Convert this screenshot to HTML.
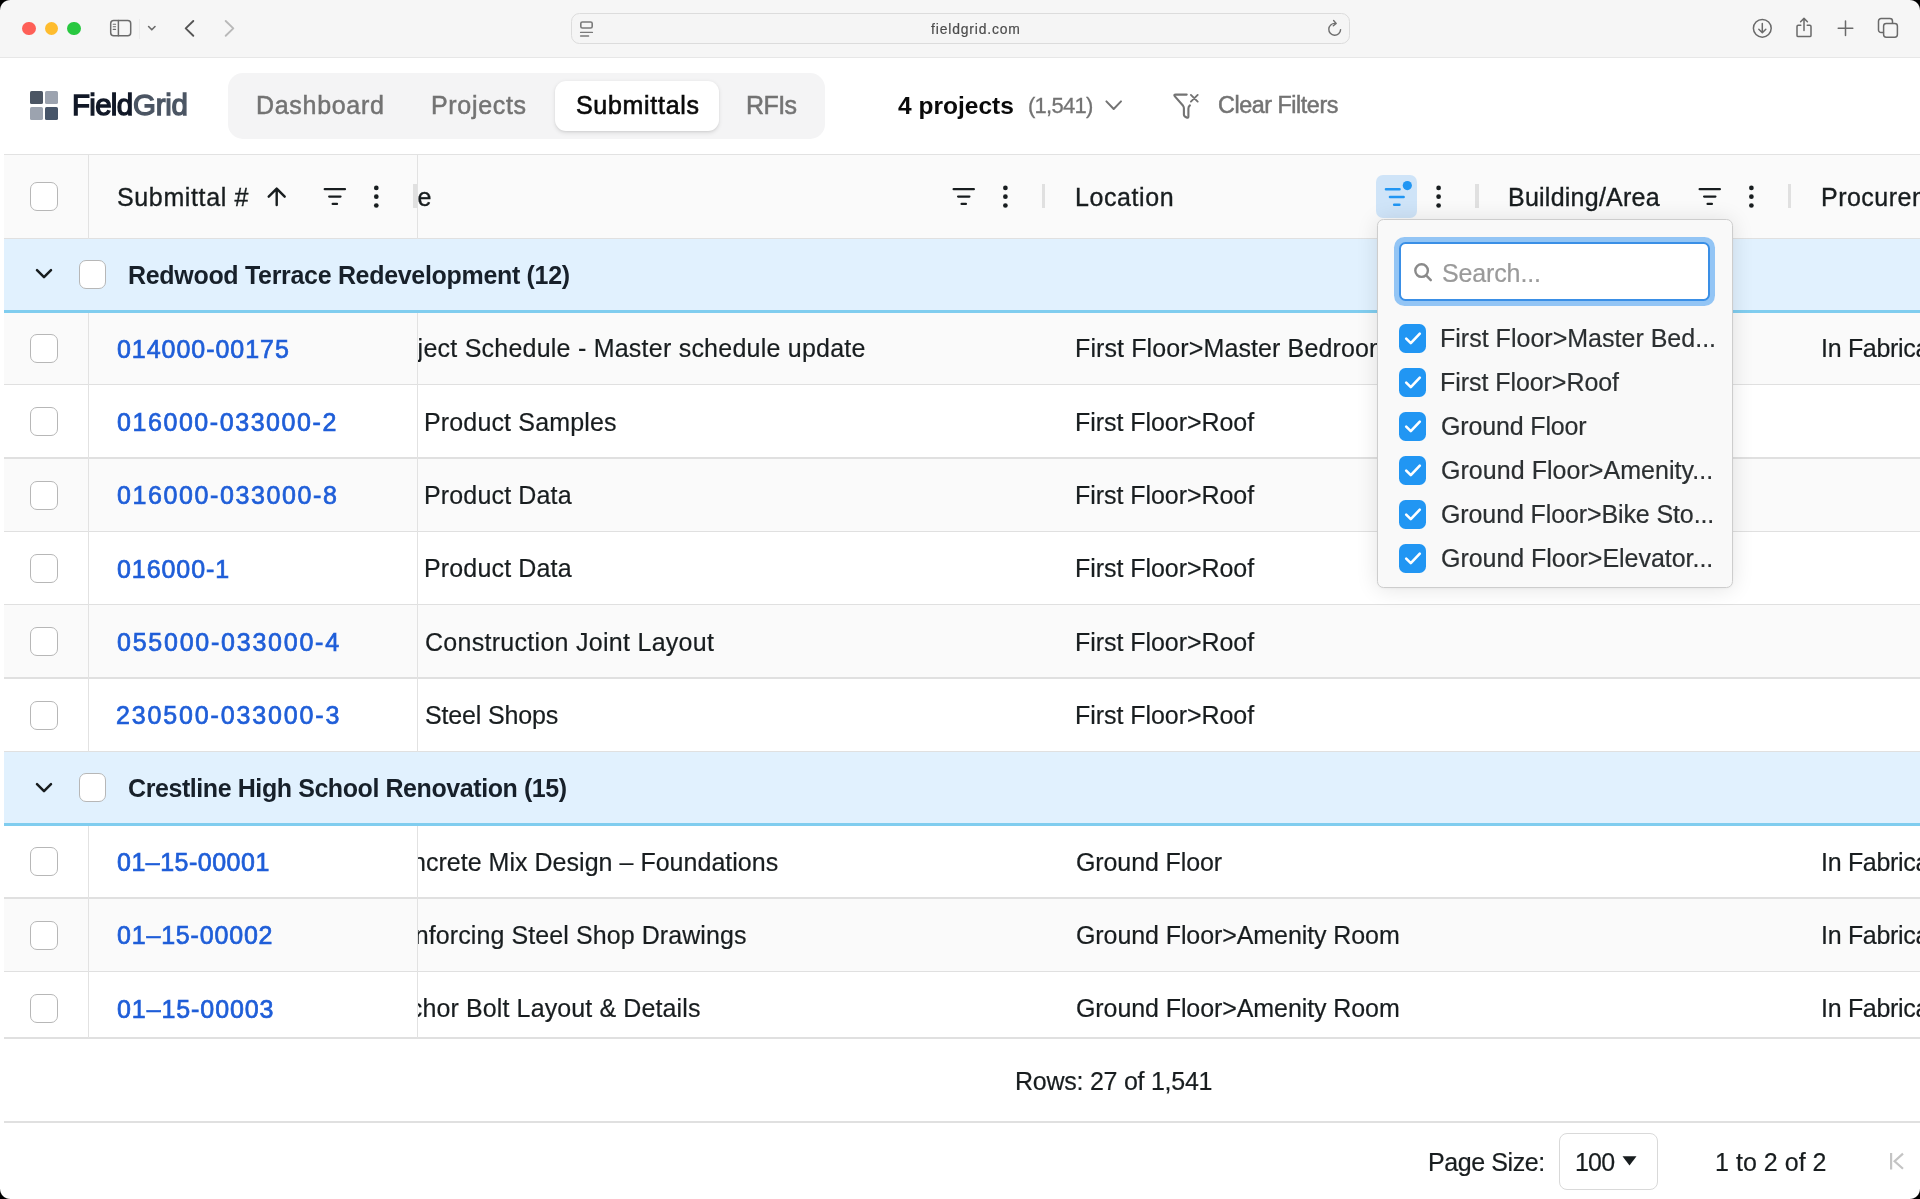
<!DOCTYPE html>
<html lang="en"><head><meta charset="utf-8"><title>FieldGrid - Submittals</title>
<style>
html,body{margin:0;padding:0}
body{width:1920px;height:1199px;position:relative;overflow:hidden;background:#fff;font-family:"Liberation Sans",sans-serif;color:#181d1f}
.a{position:absolute;box-sizing:border-box}
.t{position:absolute;white-space:nowrap;will-change:transform;font-family:"Liberation Sans",sans-serif}
.clip{position:absolute;overflow:hidden}
svg{position:absolute;overflow:visible}
.hl{position:absolute;height:1.5px;background:#e0e0e0;left:3.5px;right:0}
.cb{position:absolute;box-sizing:border-box;width:27.6px;height:29px;border:1.6px solid #b7b7b7;border-radius:7px;background:#fff}
.cbk{position:absolute;box-sizing:border-box;width:28px;height:28px;border-radius:6.5px;background:#2196f3}
.rowbg{position:absolute;left:3.5px;right:0;background:#fafafa}
.grp{position:absolute;left:3.5px;right:0;background:#e1f1fe;border-bottom:3.6px solid #80cdef;box-sizing:border-box}
.vl{position:absolute;width:1.4px;background:#e2e2e2}
.rs{position:absolute;width:3.4px;height:24.4px;background:#e0e0e0}

</style></head>
<body>
<div class="a" style="left:0;top:0;width:1920px;height:58.1px;background:#f6f6f6;border-bottom:1.7px solid #e7e7e7"></div>
<div class="a" style="left:22.1px;top:21.6px;width:13.8px;height:13.8px;border-radius:50%;background:#fe5f57"></div>
<div class="a" style="left:44.6px;top:21.6px;width:13.8px;height:13.8px;border-radius:50%;background:#febc2e"></div>
<div class="a" style="left:67.1px;top:21.6px;width:13.8px;height:13.8px;border-radius:50%;background:#28c840"></div>
<svg style="left:108px;top:17px" width="52" height="24" viewBox="108 17 52 24" fill="none" stroke="#6b6b6b" stroke-width="1.5" stroke-linecap="round" stroke-linejoin="round">
<rect x="110.7" y="20.5" width="20" height="15.2" rx="3"/><path d="M118.4 20.5v15.2"/><path d="M113.2 24.2h2.4M113.2 26.8h2.4M113.2 29.4h2.4" stroke-width="1.1"/>
<path d="M148.6 26.5l3.2 3.3 3.2-3.3" stroke-width="1.6"/></svg>
<div class="a" style="left:139.3px;top:19px;width:1px;height:20px;background:#ebebeb"></div>
<svg style="left:180px;top:17px" width="60" height="24" viewBox="180 17 60 24" fill="none" stroke-width="2" stroke-linecap="round" stroke-linejoin="round">
<path d="M193.3 21l-7.6 7.4 7.6 7.4" stroke="#555" stroke-width="1.9"/><path d="M225.7 21l7.6 7.4-7.6 7.4" stroke="#b9b9b9" stroke-width="1.9"/></svg>
<div class="a" style="left:570.5px;top:12.6px;width:779px;height:31.8px;border-radius:8.5px;background:#f5f5f5;border:1.4px solid #dcdcdc"></div>
<svg style="left:578px;top:19px" width="18" height="20" viewBox="578 19 18 20" fill="none" stroke="#7a7a7a" stroke-width="1.4" stroke-linecap="round" stroke-linejoin="round">
<rect x="580.8" y="22" width="11.4" height="6" rx="1.6" stroke-width="1.6"/><path d="M580.6 32.4h11.8M580.6 36h8"/></svg>
<svg style="left:1326px;top:19px" width="18" height="20" viewBox="1326 19 18 20" fill="none" stroke="#6e6e6e" stroke-width="1.4" stroke-linecap="round" stroke-linejoin="round">
<path d="M1340.6 29.6a5.9 5.9 0 1 1-5.6-6.2"/><path d="M1333.6 20.6l2.6 2.8-2.9 2.4"/></svg>
<svg style="left:1750px;top:15px" width="160" height="28" viewBox="1750 15 160 28" fill="none" stroke="#6a6a6a" stroke-width="1.5" stroke-linecap="round" stroke-linejoin="round">
<circle cx="1762.3" cy="28.3" r="8.9"/><path d="M1762.3 23.5v9M1758.8 29.3l3.5 3.5 3.5-3.5"/>
<path d="M1800.8 25.2h-2.6a1.2 1.2 0 0 0-1.2 1.2v9a1.2 1.2 0 0 0 1.2 1.2h11.6a1.2 1.2 0 0 0 1.2-1.2v-9a1.2 1.2 0 0 0-1.2-1.2h-2.6"/><path d="M1804 30.6V18.6M1800.6 21.8l3.4-3.4 3.4 3.4"/>
<path d="M1845.5 21v14.6M1838.2 28.3h14.6"/>
<path d="M1883.4 32.6h-2.3a2.6 2.6 0 0 1-2.6-2.6v-8.8a2.6 2.6 0 0 1 2.6-2.6h8.8a2.6 2.6 0 0 1 2.6 2.6v2"/><rect x="1883.6" y="23.4" width="13.8" height="13.8" rx="2.6"/></svg>
<div class="a" style="left:30.2px;top:91.2px;width:12.6px;height:12.8px;border-radius:1.6px;background:#4b5563"></div>
<div class="a" style="left:45.2px;top:91.2px;width:12.6px;height:12.8px;border-radius:1.6px;background:#9ca3af"></div>
<div class="a" style="left:30.2px;top:106.8px;width:12.6px;height:12.8px;border-radius:1.6px;background:#9ca3af"></div>
<div class="a" style="left:45.2px;top:106.8px;width:12.6px;height:12.8px;border-radius:1.6px;background:#475569"></div>
<div class="a" style="left:228px;top:72.5px;width:597px;height:66.5px;border-radius:15px;background:#f4f4f5"></div>
<div class="a" style="left:555px;top:80.5px;width:164px;height:50.5px;border-radius:11px;background:#fff;box-shadow:0 1.5px 4px rgba(0,0,0,.10),0 1px 2px rgba(0,0,0,.06)"></div>
<svg style="left:1100px;top:90px" width="110" height="34" viewBox="1100 90 110 34" fill="none" stroke="#737373" stroke-width="2" stroke-linecap="round" stroke-linejoin="round">
<path d="M1106.4 101.4l7.3 7.6 7.3-7.6"/>
<path d="M1186.7 94.6H1175.8Q1173.4 94.6 1174.9 96.4L1183.1 105.8Q1183.9 106.8 1183.9 108.2V114.8Q1183.9 116 1184.9 116.5L1186.6 117.5Q1188.4 118.4 1188.4 116.4V108.4Q1188.4 106.6 1189.9 105.4" stroke-width="2.1"/><path d="M1190.9 94.9l6.8 6.7M1197.7 94.9l-6.8 6.7" stroke-width="1.9"/></svg>
<span class="t" style="left:931.10px;top:19.50px;font-size:13.9px;line-height:19px;color:#4c4c4c;letter-spacing:0.844px;-webkit-text-stroke:0.2px #4c4c4c;">fieldgrid.com</span>
<span class="t" style="left:71.80px;top:84.40px;font-size:29.5px;line-height:41px;color:#111827;letter-spacing:-0.709px;-webkit-text-stroke:1.3px #111827;">Field</span>
<span class="t" style="left:132.50px;top:84.40px;font-size:29.5px;line-height:41px;color:#4b5563;letter-spacing:-0.308px;-webkit-text-stroke:1.3px #4b5563;">Grid</span>
<span class="t" style="left:255.50px;top:88.10px;font-size:25px;line-height:35px;color:#737373;letter-spacing:0.700px;-webkit-text-stroke:0.5px #737373;">Dashboard</span>
<span class="t" style="left:431.40px;top:88.10px;font-size:25px;line-height:35px;color:#737373;letter-spacing:0.685px;-webkit-text-stroke:0.5px #737373;">Projects</span>
<span class="t" style="left:575.50px;top:88.10px;font-size:25px;line-height:35px;color:#0a0a0a;letter-spacing:0.699px;-webkit-text-stroke:0.6px #0a0a0a;">Submittals</span>
<span class="t" style="left:746.00px;top:88.10px;font-size:25px;line-height:35px;color:#737373;letter-spacing:-0.590px;-webkit-text-stroke:0.5px #737373;">RFIs</span>
<span class="t" style="left:898.00px;top:88.70px;font-size:24.5px;line-height:34px;color:#0a0a0a;letter-spacing:0.021px;font-weight:700;">4 projects</span>
<span class="t" style="left:1028.00px;top:90.20px;font-size:22px;line-height:31px;color:#737373;letter-spacing:-0.730px;-webkit-text-stroke:0.3px #737373;">(1,541)</span>
<span class="t" style="left:1217.50px;top:89.00px;font-size:23.3px;line-height:33px;color:#737373;letter-spacing:-0.434px;-webkit-text-stroke:0.5px #737373;">Clear Filters</span>
<div class="a" style="left:3.5px;top:154px;right:0;height:84.5px;background:#fafafa"></div>
<div class="hl" style="top:153.6px;background:#e2e2e2"></div>
<div class="rowbg" style="top:311.33px;height:73.33px"></div>
<div class="rowbg" style="top:458.00px;height:73.33px"></div>
<div class="rowbg" style="top:604.66px;height:73.33px"></div>
<div class="rowbg" style="top:897.99px;height:73.33px"></div>
<div class="hl" style="top:383.96px"></div>
<div class="hl" style="top:457.30px"></div>
<div class="hl" style="top:530.63px"></div>
<div class="hl" style="top:603.96px"></div>
<div class="hl" style="top:677.29px"></div>
<div class="hl" style="top:750.63px"></div>
<div class="hl" style="top:897.29px"></div>
<div class="hl" style="top:970.63px"></div>
<div class="hl" style="top:237.6px"></div>
<div class="a" style="left:3.5px;right:0;top:1038px;height:161px;background:#fff"></div>
<div class="hl" style="top:1037.2px"></div>
<div class="hl" style="top:1121.3px"></div>
<div class="vl" style="left:88px;top:154px;height:884px"></div>
<div class="vl" style="left:417px;top:154px;height:884px"></div>
<div class="grp" style="top:238.6px;height:74.03px"></div>
<div class="grp" style="top:751.63px;height:74.13px"></div>
<div class="rs" style="left:413.2px;top:184px;width:4px"></div>
<div class="rs" style="left:1042px;top:184px"></div>
<div class="rs" style="left:1475.3px;top:184px"></div>
<div class="rs" style="left:1788px;top:184px"></div>
<div class="cb" style="left:30.2px;top:182.2px"></div>
<div class="cb" style="left:30.2px;top:334.00px"></div>
<div class="cb" style="left:30.2px;top:407.33px"></div>
<div class="cb" style="left:30.2px;top:480.66px"></div>
<div class="cb" style="left:30.2px;top:554.00px"></div>
<div class="cb" style="left:30.2px;top:627.33px"></div>
<div class="cb" style="left:30.2px;top:700.66px"></div>
<div class="cb" style="left:30.2px;top:847.33px"></div>
<div class="cb" style="left:30.2px;top:920.66px"></div>
<div class="cb" style="left:30.2px;top:993.99px"></div>
<div class="cb" style="left:78.7px;top:259.80px"></div>
<svg style="left:34px;top:266.20px" width="20" height="16" viewBox="0 0 20 16" fill="none" stroke="#181d1f" stroke-width="2.5" stroke-linecap="round" stroke-linejoin="round"><path d="M3 4.2l7 7 7-7"/></svg>
<div class="cb" style="left:78.7px;top:773.29px"></div>
<svg style="left:34px;top:779.69px" width="20" height="16" viewBox="0 0 20 16" fill="none" stroke="#181d1f" stroke-width="2.5" stroke-linecap="round" stroke-linejoin="round"><path d="M3 4.2l7 7 7-7"/></svg>
<svg style="left:0;top:154px" width="1920" height="84" viewBox="0 154 1920 84" fill="none" stroke-width="2.3" stroke-linecap="round" stroke-linejoin="round">
<path d="M276.7 205v-16.2M268.7 196.7l8-8.1 8 8.1" stroke="#181d1f" stroke-width="2.4"/>
<path d="M324.75 189.2h20.2M329.20 196.6h11.3M332.70 203.9h4.3" stroke="#181d1f"/>
<circle cx="376.3" cy="187.89999999999998" r="2.35" fill="#181d1f" stroke="none"/><circle cx="376.3" cy="196.7" r="2.35" fill="#181d1f" stroke="none"/><circle cx="376.3" cy="205.5" r="2.35" fill="#181d1f" stroke="none"/>
<path d="M953.65 189.2h20.2M958.10 196.6h11.3M961.60 203.9h4.3" stroke="#181d1f"/>
<circle cx="1005.4" cy="187.89999999999998" r="2.35" fill="#181d1f" stroke="none"/><circle cx="1005.4" cy="196.7" r="2.35" fill="#181d1f" stroke="none"/><circle cx="1005.4" cy="205.5" r="2.35" fill="#181d1f" stroke="none"/>
<circle cx="1438.6" cy="187.89999999999998" r="2.35" fill="#181d1f" stroke="none"/><circle cx="1438.6" cy="196.7" r="2.35" fill="#181d1f" stroke="none"/><circle cx="1438.6" cy="205.5" r="2.35" fill="#181d1f" stroke="none"/>
<path d="M1699.65 189.2h20.2M1704.10 196.6h11.3M1707.60 203.9h4.3" stroke="#181d1f"/>
<circle cx="1751.4" cy="187.89999999999998" r="2.35" fill="#181d1f" stroke="none"/><circle cx="1751.4" cy="196.7" r="2.35" fill="#181d1f" stroke="none"/><circle cx="1751.4" cy="205.5" r="2.35" fill="#181d1f" stroke="none"/>
</svg>
<div class="a" style="left:1559px;top:1132.5px;width:99px;height:57px;border:1.5px solid #d9d9d9;border-radius:8px;background:#fff"></div>
<svg style="left:1620px;top:1154px" width="18" height="14" viewBox="0 0 18 14"><path d="M2.5 2.3h14l-7 9.3z" fill="#181d1f"/></svg>
<svg style="left:1886px;top:1150px" width="22" height="22" viewBox="1886 1150 22 22" fill="none" stroke="#c4c4c4" stroke-width="2.2" stroke-linecap="butt"><path d="M1891.1 1153v16.4M1903 1153.6l-8.4 7.6 8.4 7.6"/></svg>
<span class="t" style="left:116.50px;top:180.10px;font-size:25px;line-height:35px;color:#181d1f;letter-spacing:0.634px;-webkit-text-stroke:0.35px #181d1f;">Submittal #</span>
<div class="clip" style="left:417.8px;top:180.10px;width:625.2px;height:35px"><span class="t" style="left:-30.70px;top:0px;font-size:25px;line-height:35px;color:#181d1f;letter-spacing:-0.500px;-webkit-text-stroke:0.35px #181d1f;">Title</span></div>
<span class="t" style="left:1074.60px;top:180.10px;font-size:25px;line-height:35px;color:#181d1f;letter-spacing:0.584px;-webkit-text-stroke:0.35px #181d1f;">Location</span>
<span class="t" style="left:1507.70px;top:180.10px;font-size:25px;line-height:35px;color:#181d1f;letter-spacing:0.241px;-webkit-text-stroke:0.35px #181d1f;">Building/Area</span>
<div class="clip" style="left:1800px;top:180.10px;width:120px;height:35px"><span class="t" style="left:20.50px;top:0px;font-size:25px;line-height:35px;color:#181d1f;letter-spacing:0.478px;-webkit-text-stroke:0.35px #181d1f;">Procurement Status</span></div>
<span class="t" style="left:128.20px;top:257.60px;font-size:25px;line-height:35px;color:#17202a;letter-spacing:-0.312px;font-weight:700;">Redwood Terrace Redevelopment (12)</span>
<span class="t" style="left:127.90px;top:770.80px;font-size:25px;line-height:35px;color:#17202a;letter-spacing:-0.419px;font-weight:700;">Crestline High School Renovation (15)</span>
<span class="t" style="left:117.30px;top:331.80px;font-size:25px;line-height:35px;color:#1f5ed8;letter-spacing:0.958px;-webkit-text-stroke:0.7px #1f5ed8;">014000-00175</span>
<div class="clip" style="left:417.8px;top:331.40px;width:625.2px;height:35px"><span class="t" style="left:-39.49px;top:0px;font-size:25px;line-height:35px;color:#181d1f;letter-spacing:0.234px;-webkit-text-stroke:0.2px #181d1f;">Project Schedule - Master schedule update</span></div>
<div class="clip" style="left:1060px;top:331.40px;width:417px;height:35px"><span class="t" style="left:15.00px;top:0px;font-size:25px;line-height:35px;color:#181d1f;letter-spacing:0.114px;-webkit-text-stroke:0.2px #181d1f;">First Floor&gt;Master Bedroom</span></div>
<div class="clip" style="left:1800px;top:331.40px;width:120px;height:35px"><span class="t" style="left:20.50px;top:0px;font-size:25px;line-height:35px;color:#181d1f;letter-spacing:-0.300px;-webkit-text-stroke:0.2px #181d1f;">In Fabrication</span></div>
<span class="t" style="left:117.30px;top:405.13px;font-size:25px;line-height:35px;color:#1f5ed8;letter-spacing:1.565px;-webkit-text-stroke:0.7px #1f5ed8;">016000-033000-2</span>
<div class="clip" style="left:417.8px;top:404.73px;width:625.2px;height:35px"><span class="t" style="left:6.20px;top:0px;font-size:25px;line-height:35px;color:#181d1f;letter-spacing:0.152px;-webkit-text-stroke:0.2px #181d1f;">Product Samples</span></div>
<span class="t" style="left:1075.00px;top:404.73px;font-size:25px;line-height:35px;color:#181d1f;letter-spacing:-0.051px;-webkit-text-stroke:0.2px #181d1f;">First Floor&gt;Roof</span>
<span class="t" style="left:117.30px;top:478.46px;font-size:25px;line-height:35px;color:#1f5ed8;letter-spacing:1.600px;-webkit-text-stroke:0.7px #1f5ed8;">016000-033000-8</span>
<div class="clip" style="left:417.8px;top:478.06px;width:625.2px;height:35px"><span class="t" style="left:6.20px;top:0px;font-size:25px;line-height:35px;color:#181d1f;letter-spacing:0.154px;-webkit-text-stroke:0.2px #181d1f;">Product Data</span></div>
<span class="t" style="left:1075.00px;top:478.06px;font-size:25px;line-height:35px;color:#181d1f;letter-spacing:-0.051px;-webkit-text-stroke:0.2px #181d1f;">First Floor&gt;Roof</span>
<span class="t" style="left:117.30px;top:551.80px;font-size:25px;line-height:35px;color:#1f5ed8;letter-spacing:0.922px;-webkit-text-stroke:0.7px #1f5ed8;">016000-1</span>
<div class="clip" style="left:417.8px;top:551.40px;width:625.2px;height:35px"><span class="t" style="left:6.20px;top:0px;font-size:25px;line-height:35px;color:#181d1f;letter-spacing:0.154px;-webkit-text-stroke:0.2px #181d1f;">Product Data</span></div>
<span class="t" style="left:1075.00px;top:551.40px;font-size:25px;line-height:35px;color:#181d1f;letter-spacing:-0.051px;-webkit-text-stroke:0.2px #181d1f;">First Floor&gt;Roof</span>
<span class="t" style="left:117.30px;top:625.13px;font-size:25px;line-height:35px;color:#1f5ed8;letter-spacing:1.765px;-webkit-text-stroke:0.7px #1f5ed8;">055000-033000-4</span>
<div class="clip" style="left:417.8px;top:624.73px;width:625.2px;height:35px"><span class="t" style="left:7.20px;top:0px;font-size:25px;line-height:35px;color:#181d1f;letter-spacing:0.285px;-webkit-text-stroke:0.2px #181d1f;">Construction Joint Layout</span></div>
<span class="t" style="left:1075.00px;top:624.73px;font-size:25px;line-height:35px;color:#181d1f;letter-spacing:-0.051px;-webkit-text-stroke:0.2px #181d1f;">First Floor&gt;Roof</span>
<span class="t" style="left:116.30px;top:698.46px;font-size:25px;line-height:35px;color:#1f5ed8;letter-spacing:1.850px;-webkit-text-stroke:0.7px #1f5ed8;">230500-033000-3</span>
<div class="clip" style="left:417.8px;top:698.06px;width:625.2px;height:35px"><span class="t" style="left:7.20px;top:0px;font-size:25px;line-height:35px;color:#181d1f;letter-spacing:-0.161px;-webkit-text-stroke:0.2px #181d1f;">Steel Shops</span></div>
<span class="t" style="left:1075.00px;top:698.06px;font-size:25px;line-height:35px;color:#181d1f;letter-spacing:-0.051px;-webkit-text-stroke:0.2px #181d1f;">First Floor&gt;Roof</span>
<span class="t" style="left:117.30px;top:845.13px;font-size:25px;line-height:35px;color:#1f5ed8;letter-spacing:0.494px;-webkit-text-stroke:0.7px #1f5ed8;">01–15-00001</span>
<div class="clip" style="left:417.8px;top:844.73px;width:625.2px;height:35px"><span class="t" style="left:-37.44px;top:0px;font-size:25px;line-height:35px;color:#181d1f;letter-spacing:0.025px;-webkit-text-stroke:0.2px #181d1f;">Concrete Mix Design – Foundations</span></div>
<span class="t" style="left:1075.50px;top:844.73px;font-size:25px;line-height:35px;color:#181d1f;letter-spacing:-0.110px;-webkit-text-stroke:0.2px #181d1f;">Ground Floor</span>
<div class="clip" style="left:1800px;top:844.73px;width:120px;height:35px"><span class="t" style="left:20.50px;top:0px;font-size:25px;line-height:35px;color:#181d1f;letter-spacing:-0.300px;-webkit-text-stroke:0.2px #181d1f;">In Fabrication</span></div>
<span class="t" style="left:117.30px;top:918.46px;font-size:25px;line-height:35px;color:#1f5ed8;letter-spacing:0.814px;-webkit-text-stroke:0.7px #1f5ed8;">01–15-00002</span>
<div class="clip" style="left:417.8px;top:918.06px;width:625.2px;height:35px"><span class="t" style="left:-41.00px;top:0px;font-size:25px;line-height:35px;color:#181d1f;letter-spacing:0.088px;-webkit-text-stroke:0.2px #181d1f;">Reinforcing Steel Shop Drawings</span></div>
<span class="t" style="left:1075.50px;top:918.06px;font-size:25px;line-height:35px;color:#181d1f;letter-spacing:-0.088px;-webkit-text-stroke:0.2px #181d1f;">Ground Floor&gt;Amenity Room</span>
<div class="clip" style="left:1800px;top:918.06px;width:120px;height:35px"><span class="t" style="left:20.50px;top:0px;font-size:25px;line-height:35px;color:#181d1f;letter-spacing:-0.300px;-webkit-text-stroke:0.2px #181d1f;">In Fabrication</span></div>
<span class="t" style="left:117.30px;top:991.79px;font-size:25px;line-height:35px;color:#1f5ed8;letter-spacing:0.914px;-webkit-text-stroke:0.7px #1f5ed8;">01–15-00003</span>
<div class="clip" style="left:417.8px;top:991.39px;width:625.2px;height:35px"><span class="t" style="left:-38.74px;top:0px;font-size:25px;line-height:35px;color:#181d1f;letter-spacing:0.119px;-webkit-text-stroke:0.2px #181d1f;">Anchor Bolt Layout &amp; Details</span></div>
<span class="t" style="left:1075.50px;top:991.39px;font-size:25px;line-height:35px;color:#181d1f;letter-spacing:-0.088px;-webkit-text-stroke:0.2px #181d1f;">Ground Floor&gt;Amenity Room</span>
<div class="clip" style="left:1800px;top:991.39px;width:120px;height:35px"><span class="t" style="left:20.50px;top:0px;font-size:25px;line-height:35px;color:#181d1f;letter-spacing:-0.300px;-webkit-text-stroke:0.2px #181d1f;">In Fabrication</span></div>
<span class="t" style="left:1014.90px;top:1063.50px;font-size:25px;line-height:35px;color:#181d1f;letter-spacing:-0.251px;-webkit-text-stroke:0.2px #181d1f;">Rows: 27 of 1,541</span>
<span class="t" style="left:1427.75px;top:1144.60px;font-size:25px;line-height:35px;color:#181d1f;letter-spacing:-0.402px;-webkit-text-stroke:0.2px #181d1f;">Page Size:</span>
<span class="t" style="left:1574.60px;top:1144.60px;font-size:25px;line-height:35px;color:#181d1f;letter-spacing:-0.829px;-webkit-text-stroke:0.2px #181d1f;">100</span>
<span class="t" style="left:1715.00px;top:1144.60px;font-size:25px;line-height:35px;color:#181d1f;letter-spacing:0.031px;-webkit-text-stroke:0.2px #181d1f;">1 to 2 of 2</span>
<div class="a" style="left:1376.3px;top:175.2px;width:41px;height:42.5px;border-radius:7px;background:#cfe4f8"></div>
<svg style="left:1376px;top:175px" width="44" height="44" viewBox="1376 175 44 44" fill="none" stroke="#2196f3" stroke-width="2.6" stroke-linecap="round"><path d="M1386 189.2h13.5M1390 197h13.6M1394.2 204.8h5.2"/><circle cx="1407.3" cy="185.6" r="4.6" fill="#2196f3" stroke="none"/></svg>
<div class="a" style="left:1376.6px;top:218.8px;width:356.4px;height:369px;border-radius:6.5px;background:#f9f9f9;border:1.5px solid #cdcdcd;box-shadow:0 1px 22px rgba(0,0,0,.11),0 1px 3px rgba(0,0,0,.04)"></div>
<div class="a" style="left:1394px;top:236.8px;width:321px;height:69.2px;border-radius:10.5px;background:#93c5f5"></div>
<div class="a" style="left:1398.6px;top:241.8px;width:311.8px;height:59.2px;border-radius:6.5px;background:#fff;border:2px solid #3a8fe6"></div>
<svg style="left:1410px;top:260px" width="26" height="26" viewBox="1410 260 26 26" fill="none" stroke="#8a8a8a" stroke-width="2.4" stroke-linecap="round"><circle cx="1421.6" cy="270.6" r="6.3"/><path d="M1426.4 275.6l4.4 4.6"/></svg>
<div class="cbk" style="left:1398.8px;top:323.5px;width:27.6px;height:29px"></div>
<svg style="left:1398.6px;top:323.9px" width="28" height="28" viewBox="0 0 28 28" fill="none" stroke="#fff" stroke-width="2.6" stroke-linecap="round" stroke-linejoin="round"><path d="M7.2 14.6l4.6 4.6 9-9.6"/></svg>
<div class="cbk" style="left:1398.8px;top:367.5px;width:27.6px;height:29px"></div>
<svg style="left:1398.6px;top:367.9px" width="28" height="28" viewBox="0 0 28 28" fill="none" stroke="#fff" stroke-width="2.6" stroke-linecap="round" stroke-linejoin="round"><path d="M7.2 14.6l4.6 4.6 9-9.6"/></svg>
<div class="cbk" style="left:1398.8px;top:411.5px;width:27.6px;height:29px"></div>
<svg style="left:1398.6px;top:411.9px" width="28" height="28" viewBox="0 0 28 28" fill="none" stroke="#fff" stroke-width="2.6" stroke-linecap="round" stroke-linejoin="round"><path d="M7.2 14.6l4.6 4.6 9-9.6"/></svg>
<div class="cbk" style="left:1398.8px;top:455.5px;width:27.6px;height:29px"></div>
<svg style="left:1398.6px;top:455.9px" width="28" height="28" viewBox="0 0 28 28" fill="none" stroke="#fff" stroke-width="2.6" stroke-linecap="round" stroke-linejoin="round"><path d="M7.2 14.6l4.6 4.6 9-9.6"/></svg>
<div class="cbk" style="left:1398.8px;top:499.5px;width:27.6px;height:29px"></div>
<svg style="left:1398.6px;top:499.9px" width="28" height="28" viewBox="0 0 28 28" fill="none" stroke="#fff" stroke-width="2.6" stroke-linecap="round" stroke-linejoin="round"><path d="M7.2 14.6l4.6 4.6 9-9.6"/></svg>
<div class="cbk" style="left:1398.8px;top:543.5px;width:27.6px;height:29px"></div>
<svg style="left:1398.6px;top:543.9px" width="28" height="28" viewBox="0 0 28 28" fill="none" stroke="#fff" stroke-width="2.6" stroke-linecap="round" stroke-linejoin="round"><path d="M7.2 14.6l4.6 4.6 9-9.6"/></svg>
<span class="t" style="left:1442.00px;top:255.50px;font-size:25px;line-height:35px;color:#9a9a9a;letter-spacing:-0.138px;-webkit-text-stroke:0.2px #9a9a9a;">Search...</span>
<span class="t" style="left:1439.90px;top:321.40px;font-size:25px;line-height:35px;color:#2b2f31;letter-spacing:0.012px;-webkit-text-stroke:0.2px #2b2f31;">First Floor&gt;Master Bed...</span>
<span class="t" style="left:1439.90px;top:365.40px;font-size:25px;line-height:35px;color:#2b2f31;letter-spacing:-0.057px;-webkit-text-stroke:0.2px #2b2f31;">First Floor&gt;Roof</span>
<span class="t" style="left:1440.70px;top:409.40px;font-size:25px;line-height:35px;color:#2b2f31;letter-spacing:-0.151px;-webkit-text-stroke:0.2px #2b2f31;">Ground Floor</span>
<span class="t" style="left:1440.70px;top:453.40px;font-size:25px;line-height:35px;color:#2b2f31;letter-spacing:0.048px;-webkit-text-stroke:0.2px #2b2f31;">Ground Floor&gt;Amenity...</span>
<span class="t" style="left:1440.70px;top:497.40px;font-size:25px;line-height:35px;color:#2b2f31;letter-spacing:-0.112px;-webkit-text-stroke:0.2px #2b2f31;">Ground Floor&gt;Bike Sto...</span>
<span class="t" style="left:1440.70px;top:541.40px;font-size:25px;line-height:35px;color:#2b2f31;letter-spacing:-0.035px;-webkit-text-stroke:0.2px #2b2f31;">Ground Floor&gt;Elevator...</span>
<div class="a" style="left:0;top:0;width:10px;height:10px;background:radial-gradient(circle at 100% 100%,transparent 9.4px,#000 10.4px)"></div>
<div class="a" style="right:0;top:0;width:10px;height:10px;background:radial-gradient(circle at 0 100%,transparent 9.4px,#000 10.4px)"></div>
<div class="a" style="left:0;bottom:0;width:10px;height:10px;background:radial-gradient(circle at 100% 0,transparent 9.4px,#000 10.4px)"></div>
<div class="a" style="right:0;bottom:0;width:10px;height:10px;background:radial-gradient(circle at 0 0,transparent 9.4px,#000 10.4px)"></div>
</body></html>
